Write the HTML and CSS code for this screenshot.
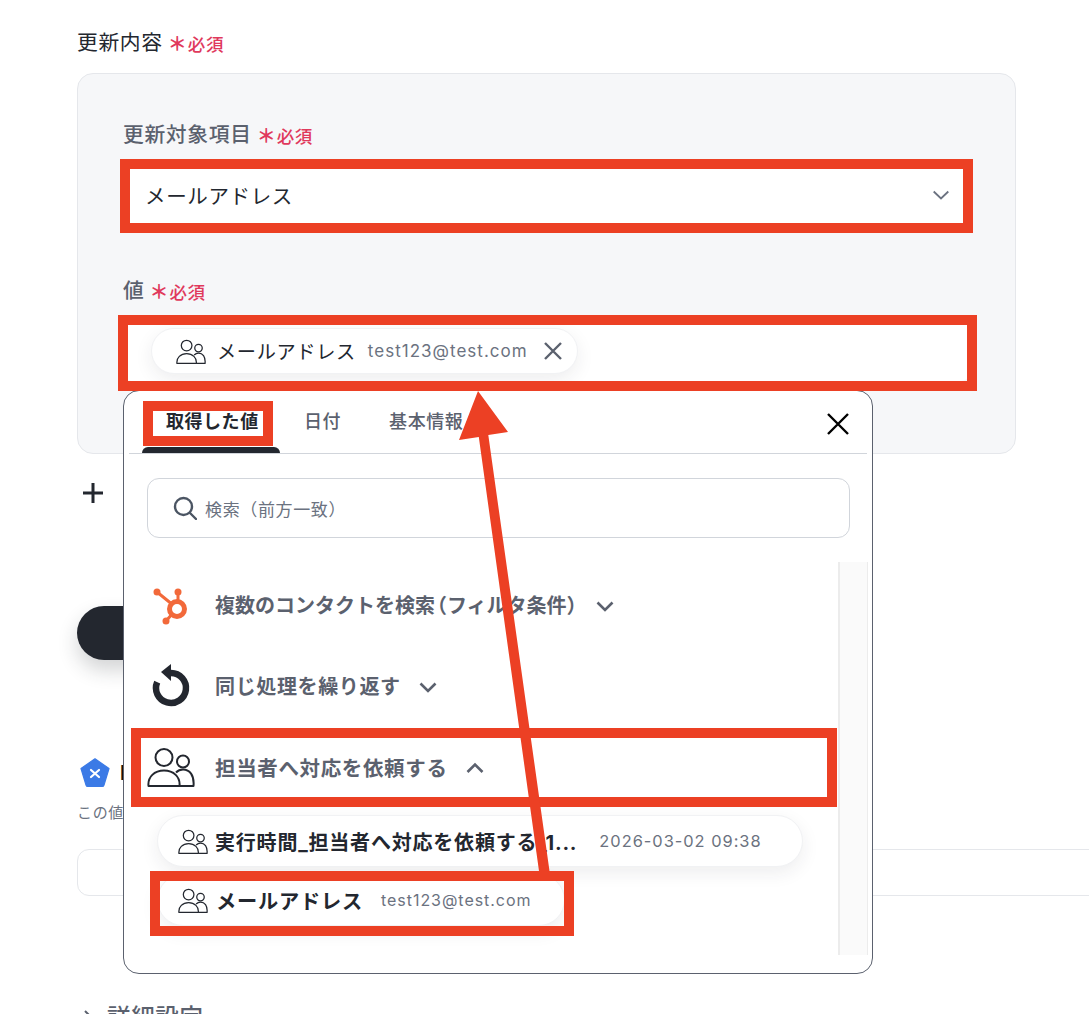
FILE: index.html
```html
<!DOCTYPE html>
<html lang="ja">
<head>
<meta charset="utf-8">
<title>更新内容</title>
<link rel="stylesheet" href="styles.css">
</head>
<body>
<svg class="defs" width="0" height="0" aria-hidden="true">
  <symbol id="people" viewBox="0 0 48 40">
    <circle cx="17" cy="10.500" r="8.500" fill="none" stroke="currentColor" stroke-width="2"/>
    <circle cx="36" cy="14.500" r="6" fill="none" stroke="currentColor" stroke-width="2"/>
    <path d="M1.500 39c-1-9 6-15.500 15.500-15.500S33.500 30 32.500 39z" fill="none" stroke="currentColor" stroke-width="2" stroke-linejoin="round"/>
    <path d="M29 25.500c2-2 4.500-3 7-3 6.500 0 11.500 5.500 10.500 16.500H32.500" fill="none" stroke="currentColor" stroke-width="2" stroke-linejoin="round"/>
  </symbol>
</svg>

<main class="page">
  <section class="form">
    <h2 class="title">更新内容<span class="req"><span class="star">＊</span>必須</span></h2>
    <div class="card">
      <label class="label">更新対象項目<span class="req"><span class="star">＊</span>必須</span></label>
      <div class="field select">
        <span>メールアドレス</span>
        <svg class="select-chevron" viewBox="0 0 16 10"><path d="M.7 1.500 8 8.500l7.300-7"/></svg>
      </div>
      <label class="label label-second">値<span class="req"><span class="star">＊</span>必須</span></label>
      <div class="field value">
        <div class="chip chip-value">
          <svg class="people"><use href="#people"/></svg>
          <span class="chip-name">メールアドレス</span>
          <span class="chip-data">test123@test.com</span>
          <svg class="chip-x" viewBox="0 0 18 18"><path d="M1 1l16 16M17 1 1 17"/></svg>
        </div>
      </div>
    </div>
    <div class="add"><svg viewBox="0 0 22 22"><path d="M11 1v20M1 11h20"/></svg></div>
    <button class="test-btn">テスト</button>
    <div class="id-row">
      <svg class="pent" viewBox="0 0 30 30"><path d="M15 .8 29 10.500 24 27a2 2 0 0 1-2 1.500H8a2 2 0 0 1-2-1.500L1 10.500z" fill="#3b7ae6" stroke="#3b7ae6" stroke-width="1.200" stroke-linejoin="round"/><path d="M11 12l8 7M19 12l-8 7" stroke="#fff" stroke-width="2.200" stroke-linecap="round"/></svg>
      <span class="id-label">ID</span>
    </div>
    <p class="hint">この値を他の操作でも使用できます</p>
    <div class="id-input"></div>
    <div class="details"><svg class="caret" viewBox="0 0 30 20"><path d="M8 1l6 6-6 6"/></svg>詳細設定</div>
  </section>

  <aside class="popup">
    <div class="tabs">
      <div class="tab active">取得した値</div>
      <div class="tab">日付</div>
      <div class="tab">基本情報</div>
      <svg class="close" viewBox="0 0 24 24"><path d="M2 2l20 20M22 2 2 22"/></svg>
    </div>
    <div class="search">
      <svg viewBox="0 0 24 24"><circle cx="10.500" cy="10.500" r="8.500"/><path d="M17 17l6 6"/></svg>
      <span>検索（前方一致）</span>
    </div>
    <div class="list">
      <div class="rows">
        <div class="row">
          <svg class="row-icon" viewBox="0 0 48 40">
            <g fill="#f2693a" stroke="#f2693a">
              <circle cx="10" cy="7" r="3.500" stroke="none"/><circle cx="31" cy="7" r="3.500" stroke="none"/><circle cx="19" cy="36" r="3.500" stroke="none"/>
              <path d="M10 7 26 20M31 7v10M19 36l7-8" stroke-width="3" fill="none"/>
              <circle cx="30" cy="24" r="7.500" fill="none" stroke-width="5"/>
            </g>
          </svg>
          <span class="row-text row-text-tight">複数のコンタクトを検<span class="before-paren">索</span>（フィルタ条件）</span>
          <svg class="row-chevron row-chevron-tight" viewBox="0 0 18 12"><path d="M1.500 2.500 9 10l7.500-7.500"/></svg>
        </div>
        <div class="row">
          <svg class="row-icon loop" viewBox="0 0 48 44">
            <path d="M24 9A15 15 0 1 1 10.200 18.100" fill="none" stroke="#23272f" stroke-width="6.500"/>
            <path d="M24 0v17L14 8z" fill="#23272f"/>
          </svg>
          <span class="row-text">同じ処理を繰り返す</span>
          <svg class="row-chevron" viewBox="0 0 18 12"><path d="M1.500 2.500 9 10l7.500-7.500"/></svg>
        </div>
        <div class="row">
          <svg class="row-icon people-big"><use href="#people"/></svg>
          <span class="row-text row-text-wide">担当者へ対応を依頼する</span>
          <svg class="row-chevron" viewBox="0 0 18 12"><path d="M1.500 10 9 2.500l7.500 7.500"/></svg>
        </div>
        <div class="chip chip-item chip-long">
          <svg class="people"><use href="#people"/></svg>
          <span class="item-name">実行時間_担当者へ対応を依頼する_1...</span>
          <span class="item-data">2026-03-02 09:38</span>
        </div>
        <div class="chip chip-item chip-short">
          <svg class="people"><use href="#people"/></svg>
          <span class="item-name">メールアドレス</span>
          <span class="item-data">test123@test.com</span>
        </div>
      </div>
      <div class="scrollbar"></div>
    </div>
  </aside>

  <div class="mark mark-select"></div>
  <div class="mark mark-value"></div>
  <div class="mark mark-tab"></div>
  <div class="mark mark-row"></div>
  <div class="mark mark-item"></div>
  <svg class="arrow" viewBox="0 0 1089 1014">
    <path d="M478 391 508 432 488.300 435 549.500 871 539 871 478.800 437 459 440z"/>
  </svg>
</main>
</body>
</html>
```

FILE: styles.css
```css
* { box-sizing: border-box; }
html, body { margin: 0; padding: 0; background: #fff; }
body {
  height: 1014px;
  overflow: hidden;
  font-family: Inter, "Noto Sans CJK JP", sans-serif;
  color: #23272f;
  letter-spacing: 0.04em;
}
.defs { position: absolute; }
.page { position: relative; height: 1014px; overflow: hidden; }
.form { padding: 28px 0 0 77px; width: 1016px; }

.title { margin: 0; height: 30px; font-size: 20.800px; line-height: 30px; font-weight: 400; display: flex; align-items: center; }
.req { display: inline-flex; align-items: center; height: 20px; line-height: 20px; margin: 3px 0 0 5px; font-size: 17.500px; font-weight: 500; color: #e0395c; }
.star { font-weight: 700; width: 20px; font-size: 19px; line-height: 20px; }

.card {
  margin-top: 15px;
  height: 381px;
  padding: 46px 46px 0;
  background: #f6f7f9;
  border: 1px solid #e5e7eb;
  border-radius: 16px;
}
.label { display: flex; align-items: center; height: 30px; margin-left: -1px; font-size: 20.800px; line-height: 30px; font-weight: 500; color: #5b616e; }
.label-second { margin-top: 51px; }
.field { margin-top: 15px; background: #fff; border-radius: 8px; display: flex; align-items: center; height: 60px; }
.select { padding: 0 20px 0 21px; justify-content: space-between; font-size: 20.500px; color: #23272f; }
.select-chevron { width: 16px; height: 10px; fill: none; stroke: #6b7280; stroke-width: 1.800; }
.value { padding-left: 27px; }

.chip { display: flex; align-items: center; background: #fff; border-radius: 26px; box-shadow: 0 6px 18px rgba(35, 39, 47, 0.08); border: 1px solid #f1f2f4; }
.people { width: 30px; height: 25px; color: #23272f; flex: none; }
.chip-value { width: 427px; height: 46px; padding-left: 24px; }
.chip-name { margin-left: 11px; font-size: 19.200px; color: #23272f; white-space: nowrap; }
.chip-data { margin-left: 12px; font-size: 17px; color: #6b7280; letter-spacing: 0.06em; white-space: nowrap; }
.chip-x { width: 18px; height: 18px; margin-left: 16px; flex: none; fill: none; stroke: #5b616e; stroke-width: 2.400; }

.add { margin-top: 28px; height: 22px; padding-left: 5px; }
.add svg { width: 22px; height: 22px; fill: none; stroke: #23272f; stroke-width: 3; display: block; }
.test-btn { display: block; margin-top: 102px; width: 300px; height: 54px; border: 0; border-radius: 27px; background: #23272f; color: #fff; font: 500 20px Inter, "Noto Sans CJK JP", sans-serif; box-shadow: 0 10px 20px rgba(35, 39, 47, 0.2); }
.id-row { margin-top: 99px; display: flex; align-items: center; gap: 10px; padding-left: 3px; height: 28px; }
.pent { width: 30px; height: 30px; flex: none; }
.id-label { font-size: 20px; line-height: 28px; font-weight: 700; color: #111; }
.hint { margin: 16px 0 0; font-size: 15px; line-height: 20px; color: #6b7280; }
.id-input { margin-top: 26px; width: 1040px; height: 47px; background: #fff; border: 1px solid #e5e7eb; border-radius: 12px; }
.details { margin-top: 107px; font-size: 23.500px; line-height: 30px; font-weight: 500; display: flex; color: #5b616e; }
.caret { width: 30px; height: 20px; flex: none; margin-top: 7px; fill: none; stroke: #5b616e; stroke-width: 2; }

.popup {
  position: absolute;
  left: 123px;
  top: 390px;
  width: 750px;
  height: 584px;
  background: #fff;
  border: 1px solid #5b616e;
  border-radius: 16px;
}
.tabs { position: relative; height: 63px; margin: 0 5px; padding-left: 13px; border-bottom: 1px solid #d1d5db; display: flex; }
.tab { position: relative; padding: 16px 24px 0; font-size: 18px; line-height: 30px; font-weight: 500; color: #5b616e; letter-spacing: 0.03em; white-space: nowrap; }
.tab.active { color: #23272f; font-weight: 700; height: 62px; width: 138px; }
.tab.active::after { content: ""; position: absolute; left: 0; right: 0; bottom: 0; height: 6px; background: #23272f; border-radius: 6px 6px 0 0; }
.close { position: absolute; right: 17px; top: 21px; width: 24px; height: 24px; fill: none; stroke: #000; stroke-width: 2.400; }
.search { margin: 24px 22px 0 23px; height: 60px; border: 1px solid #d1d5db; border-radius: 12px; padding-left: 25px; display: flex; align-items: center; gap: 8px; font-size: 17px; color: #6b7280; }
.search svg { width: 24px; height: 24px; fill: none; stroke: #4b5563; stroke-width: 2.400; stroke-linecap: round; }
.list { position: relative; margin-top: 24px; height: 393px; display: flex; }
.rows { width: 714px; flex: none; padding-top: 2px; }
.scrollbar { width: 30px; height: 393px; background: #fafafa; border-left: 2px solid #ececec; border-right: 1px solid #ececec; }
.row { height: 81px; display: flex; align-items: center; padding-left: 23px; }
.row-icon { width: 48px; height: 40px; flex: none; color: #23272f; }
.loop { height: 44px; }
.row-text { margin-left: 20px; font-size: 20px; font-weight: 700; color: #5b616e; white-space: nowrap; }
.row-text-wide { font-size: 20.500px; }
.row-text-tight { letter-spacing: 0; }
.before-paren { letter-spacing: -8px; }
.row-chevron { margin: 2px 0 0 18px; width: 18px; height: 12px; flex: none; fill: none; stroke: #5b616e; stroke-width: 2.600; }
.row-chevron-tight { margin-left: 9px; }

.chip-item { margin-left: 33px; height: 52px; padding-left: 20px; }
.chip-long { margin-top: 8px; width: 646px; }
.chip-short { margin-top: 7px; width: 408px; }
.item-name { margin-left: 7px; font-size: 20px; font-weight: 700; color: #23272f; white-space: nowrap; letter-spacing: 0.04em; }
.chip-short .item-name { margin-left: 8px; font-size: 20.200px; }
.item-data { margin-left: 22px; font-size: 16.400px; color: #6b7280; letter-spacing: 0.06em; white-space: nowrap; }
.chip-short .item-data { margin-left: 18px; font-size: 16px; }

.mark { position: absolute; border: 10px solid #ec4024; }
.mark-select { left: 120px; top: 159px; width: 853px; height: 74px; }
.mark-value { left: 118px; top: 315px; width: 859px; height: 76px; }
.mark-tab { left: 143px; top: 401px; width: 130px; height: 45px; }
.mark-row { left: 131px; top: 728px; width: 706px; height: 79px; }
.mark-item { left: 150px; top: 871px; width: 424px; height: 65px; }
.arrow { position: absolute; left: 0; top: 0; width: 1089px; height: 1014px; pointer-events: none; }
.arrow path { fill: #ec4024; }
```
